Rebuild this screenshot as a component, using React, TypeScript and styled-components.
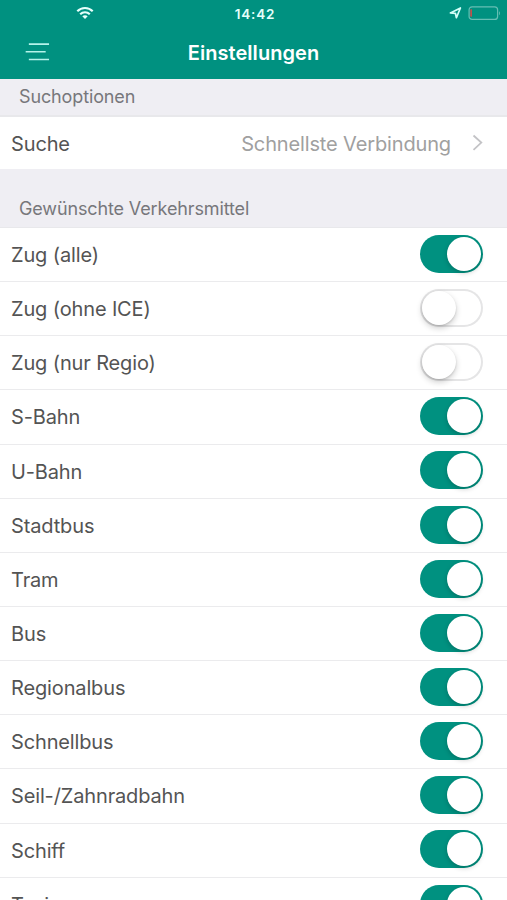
import React, { useState } from "react";
import styled, { createGlobalStyle } from "styled-components";

const GlobalStyle = createGlobalStyle`
  * { box-sizing: border-box; }
  body {
    margin: 0;
    background: #fff;
    font-family: Inter, "Liberation Sans", sans-serif;
    color: #545454;
  }
`;

const Screen = styled.div`
  width: 507px;
  height: 900px;
  overflow: hidden;
  background: #fff;
`;

const Header = styled.header`
  height: 79px;
  background: #009180;
  color: #fff;
`;

const StatusBar = styled.div`
  height: 27px;
  display: grid;
  grid-template-columns: 1fr auto 1fr;
  align-items: center;
  padding: 0 6px 0 76px;
`;

const StatusSide = styled.div<{ $end?: boolean }>`
  display: flex;
  align-items: center;
  justify-content: ${(p) => (p.$end ? "flex-end" : "flex-start")};
  gap: 6px;
  padding-bottom: 1px;
`;

const Clock = styled.time`
  font-size: 13.5px;
  font-weight: 600;
  letter-spacing: 0.8px;
  color: #e6fffb;
  margin-right: 67px;
`;

const NavBar = styled.div`
  height: 52px;
  display: grid;
  grid-template-columns: 50px 1fr 50px;
  align-items: center;
`;

const MenuButton = styled.button`
  display: flex;
  border: 0;
  padding: 0 0 2px 25px;
  background: none;
`;

const Title = styled.h1`
  margin: 0;
  padding-bottom: 1px;
  text-align: center;
  font-size: 20px;
  font-weight: 600;
  letter-spacing: 0.05px;
`;

const SectionHeader = styled.h2<{ $height: number; $line: number }>`
  margin: 0;
  height: ${(p) => p.$height}px;
  padding: 0 19px 7px;
  display: flex;
  align-items: flex-end;
  background: #efeef3;
  border-bottom: ${(p) => p.$line}px solid #e8e8eb;
  font-size: 18px;
  line-height: 22px;
  font-weight: 400;
  letter-spacing: -0.13px;
  color: #77777b;
`;

const Row = styled.div<{ $height: number; $line?: boolean }>`
  height: ${(p) => p.$height}px;
  padding: 0 24px 0 11px;
  display: flex;
  align-items: center;
  justify-content: space-between;
  border-bottom: ${(p) => (p.$line ? "1px solid #ebebed" : "0")};
`;

const Label = styled.span`
  font-size: 20px;
  line-height: 24px;
  letter-spacing: -0.14px;
  padding-top: 1px;
`;

const Value = styled(Label)`
  margin-left: auto;
  margin-right: 21px;
  color: #a0a0a0;
`;

const Track = styled.button<{ $on: boolean }>`
  width: 63px;
  height: 38px;
  margin-bottom: 1.5px;
  padding: 2px;
  display: flex;
  align-items: center;
  justify-content: ${(p) => (p.$on ? "flex-end" : "flex-start")};
  border: 0;
  border-radius: 19px;
  background: ${(p) => (p.$on ? "#009180" : "#fff")};
  box-shadow: ${(p) => (p.$on ? "none" : "inset 0 0 0 2px #e5e5e6")};
`;

const Knob = styled.span<{ $on: boolean }>`
  width: 34px;
  height: 34px;
  border-radius: 50%;
  background: #fff;
  box-shadow: ${(p) =>
    p.$on
      ? "0 2px 5px rgba(0, 0, 0, 0.2)"
      : "0 3px 6px rgba(0, 0, 0, 0.2), 0 1px 2px rgba(0, 0, 0, 0.12)"};
`;

const modes: [string, boolean][] = [
  ["Zug (alle)", true],
  ["Zug (ohne ICE)", false],
  ["Zug (nur Regio)", false],
  ["S-Bahn", true],
  ["U-Bahn", true],
  ["Stadtbus", true],
  ["Tram", true],
  ["Bus", true],
  ["Regionalbus", true],
  ["Schnellbus", true],
  ["Seil-/Zahnradbahn", true],
  ["Schiff", true],
  ["Taxi", true],
];

const WifiIcon = () => (
  <svg width="18" height="14" viewBox="0 0 18 14" fill="none" stroke="#e6fffb" strokeWidth="2.2">
    <path d="M1.3 5.2C5.6.9 12.4.9 16.7 5.2" />
    <path d="M4.2 8.2C6.9 5.6 11.1 5.6 13.8 8.2" />
    <path d="M9 13 6.3 10.3C7.8 8.9 10.2 8.9 11.7 10.3Z" fill="#e6fffb" stroke="none" />
  </svg>
);

const LocationIcon = () => (
  <svg width="13" height="12" viewBox="0 0 13 12" fill="none" stroke="#d5fff8" strokeWidth="1.7" strokeLinejoin="round">
    <path d="M1.4 5.9 11.4 1 7.4 10.7 6.4 6.3Z" />
  </svg>
);

const BatteryIcon = () => (
  <svg width="33" height="14" viewBox="0 0 33 14" fill="none">
    <rect x="1.1" y=".8" width="28.5" height="12.6" rx="3" stroke="#66bfb4" strokeWidth="1.2" />
    <path d="M4 3.2v7.6H3a.8.8 0 0 1-.8-.8V4a.8.8 0 0 1 .8-.8Z" fill="#b9534f" />
    <path d="M31 5.2v4c1.2-.6 1.2-3.4 0-4Z" fill="#66bfb4" />
  </svg>
);

const MenuIcon = () => (
  <svg width="26" height="20" viewBox="0 0 26 20" stroke="#b5f3ea" strokeWidth="1.6">
    <path d="M4 1.8H25M.7 9.8H21.5M4 17.8H25" />
  </svg>
);

const ChevronIcon = () => (
  <svg width="11" height="18" viewBox="0 0 11 18" fill="none" stroke="#c3c3c6" strokeWidth="1.8">
    <path d="M1.5 1.5 9.3 8.6 1.5 15.8" />
  </svg>
);

export default function App() {
  const [states, setStates] = useState(modes.map(([, on]) => on));
  const toggle = (index: number) =>
    setStates((prev) => prev.map((on, i) => (i === index ? !on : on)));

  return (
    <Screen>
      <GlobalStyle />
      <Header>
        <StatusBar>
          <StatusSide>
            <WifiIcon />
          </StatusSide>
          <Clock>14:42</Clock>
          <StatusSide $end>
            <LocationIcon />
            <BatteryIcon />
          </StatusSide>
        </StatusBar>
        <NavBar>
          <MenuButton aria-label="Menü">
            <MenuIcon />
          </MenuButton>
          <Title>Einstellungen</Title>
        </NavBar>
      </Header>
      <SectionHeader $height={38} $line={2}>Suchoptionen</SectionHeader>
      <Row $height={52}>
        <Label>Suche</Label>
        <Value>Schnellste Verbindung</Value>
        <ChevronIcon />
      </Row>
      <SectionHeader $height={59} $line={1}>Gewünschte Verkehrsmittel</SectionHeader>
      {modes.map(([name], i) => (
        <Row key={name} $height={54.15} $line>
          <Label>{name}</Label>
          <Track
            $on={states[i]}
            role="switch"
            aria-checked={states[i]}
            aria-label={name}
            onClick={() => toggle(i)}
          >
            <Knob $on={states[i]} />
          </Track>
        </Row>
      ))}
    </Screen>
  );
}
